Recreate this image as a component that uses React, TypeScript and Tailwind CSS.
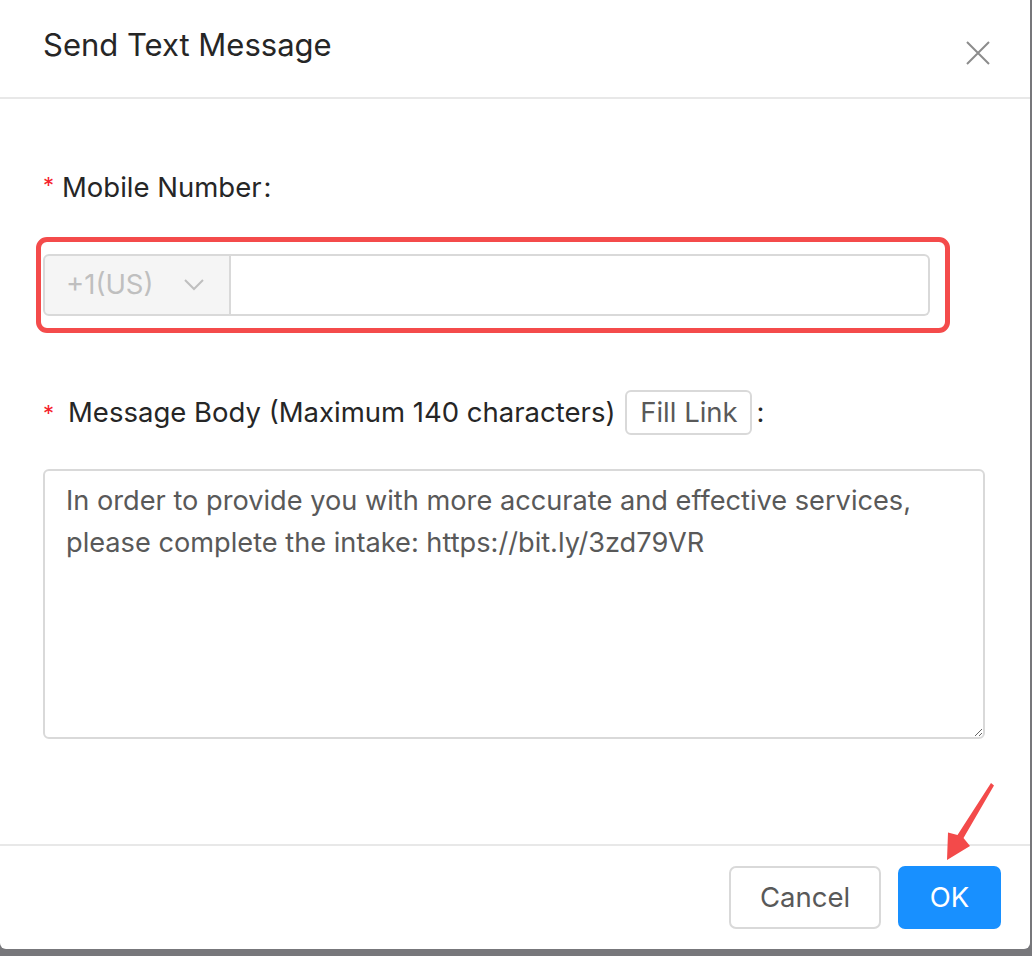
import React from "react";

export default function App() {
  const font = { fontFamily: 'Inter, "Liberation Sans", Arial, sans-serif' };
  return (
    <div className="min-h-[956px] w-[1032px] bg-[#77777b]" style={font}>
      <div className="relative flex h-[949px] w-[1030px] flex-col rounded-b-[6px] bg-white">
        {/* Header */}
        <div className="flex h-[99px] items-start justify-between border-b-2 border-[#e8e8e8] pl-[43px] pr-[40px]">
          <div className="mt-[27px] text-[31px] leading-[36px] text-[#262626]">Send Text Message</div>
          <svg className="mt-[41px]" width="24" height="24" viewBox="0 0 24 24">
            <path d="M1 1 L23 23 M23 1 L1 23" stroke="#8c8c8c" strokeWidth="2" fill="none" />
          </svg>
        </div>

        {/* Body */}
        <div className="flex-1 pl-[43px] pr-[45px] pt-[69px]">
          <div className="flex h-[40px] items-center text-[27.5px] text-[#262626]">
            <span className="mr-[8px] self-start pt-[6px] text-[22px] leading-[22px] text-[#f5222d]">*</span>
            <span>Mobile Number</span>
            <span className="ml-[2px]">:</span>
          </div>

          <div className="relative mt-[46px] w-[887px]">
            <div className="flex h-[62px] w-full">
              <div className="flex w-[188px] items-center justify-between rounded-l-[6px] border-2 border-[#d9d9d9] bg-[#f5f5f5] pl-[21px] pr-[25px] text-[27.5px] text-[#bfbfbf]">
                <span>+1(US)</span>
                <svg width="20" height="12" viewBox="0 0 20 12">
                  <path d="M1 1 L10 10 L19 1" stroke="#bfbfbf" strokeWidth="2" fill="none" />
                </svg>
              </div>
              <div className="flex-1 rounded-r-[6px] border-y-2 border-r-2 border-[#d9d9d9] bg-white" />
            </div>
            <div className="pointer-events-none absolute bottom-[-17px] left-[-7px] right-[-20px] top-[-17px] rounded-[11px] border-[5px] border-[#f44b4b]" />
          </div>

          <div className="mt-[74px] flex h-[45px] items-center text-[27.5px] text-[#262626]">
            <span className="mr-[14px] self-start pt-[12px] text-[22px] leading-[22px] text-[#f5222d]">*</span>
            <span>Message Body (Maximum 140 characters)</span>
            <button className="ml-[10px] flex h-[45px] w-[127px] items-center justify-center rounded-[6px] border-2 border-[#d9d9d9] bg-white text-[27.5px] text-[#595959]">
              Fill Link
            </button>
            <span className="ml-[4px]">:</span>
          </div>

          <textarea
            className="mt-[34px] block h-[270px] w-[942px] resize-y rounded-[6px] border-2 border-[#d9d9d9] px-[21px] py-[9px] text-[27.2px] leading-[42px] text-[#595959] outline-none"
            style={font}
            defaultValue="In order to provide you with more accurate and effective services, please complete the intake: https://bit.ly/3zd79VR"
          />
        </div>

        {/* Footer */}
        <div className="flex h-[105px] items-start justify-end gap-[17px] border-t-2 border-[#e8e8e8] pr-[29px] pt-[20px]">
          <button className="h-[63px] w-[152px] rounded-[7px] border-2 border-[#d9d9d9] bg-white text-[27.5px] text-[#595959]">
            Cancel
          </button>
          <button className="h-[63px] w-[103px] rounded-[7px] bg-[#1890ff] text-[27.5px] text-white">OK</button>
        </div>

        {/* annotation arrow */}
        <svg className="pointer-events-none absolute left-[940px] top-[780px]" width="60" height="85" viewBox="0 0 60 85">
          <polygon points="51,3 54,5.5 23.5,58 30,66 7,80 8,52.5 17.5,55" fill="#f34a4a" />
        </svg>
      </div>
    </div>
  );
}
